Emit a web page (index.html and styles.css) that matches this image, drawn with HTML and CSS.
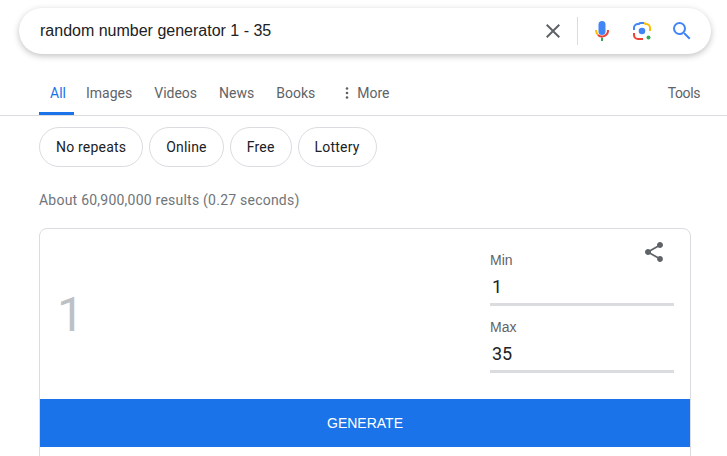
FILE: index.html
```
<!DOCTYPE html>
<html lang="en">
<head>
  <meta charset="UTF-8" />
  <title>random number generator 1 - 35</title>
  <link rel="stylesheet" href="styles.css">
</head>
<body>

<div class="search-wrap">
  <div class="search-box">
    <span class="query">random number generator 1 - 35</span>
    <svg class="ico-clear" width="24" height="24" viewBox="0 0 24 24"><path fill="#5f6368" d="M19 6.41 17.59 5 12 10.59 6.41 5 5 6.41 10.59 12 5 17.59 6.41 19 12 13.41 17.59 19 19 17.59 13.41 12z"/></svg>
    <span class="divider"></span>
    <svg class="ico-mic" width="24" height="24" viewBox="0 0 24 24">
      <rect fill="#4285f4" x="8.500" y="2" width="7" height="14" rx="3.500"/>
      <path fill="#34a853" d="M11 18.500h2V22h-2z"/>
      <path fill="none" stroke="#fbbc04" stroke-width="2" d="M6 11c0 2 .7 3.700 2 4.900"/>
      <path fill="none" stroke="#ea4335" stroke-width="2" d="M8 15.900A6 6 0 0 0 18 11"/>
    </svg>
    <svg class="ico-lens" width="24" height="24" viewBox="0 0 24 24">
      <g fill="none" stroke-width="2">
        <path stroke="#4285f4" d="M4 11V9a4 4 0 0 1 4-4h1l1-1h4"/>
        <path stroke="#fbbc04" d="M14 4l2 1a4 4 0 0 1 4 4v3"/>
        <path stroke="#ea4335" d="M4 14v2a4 4 0 0 0 4 4h5"/>
      </g>
      <circle fill="#4285f4" cx="12" cy="12" r="3.300"/>
      <circle fill="#34a853" cx="18.500" cy="18.500" r="2"/>
    </svg>
    <svg class="ico-search" width="24" height="24" viewBox="0 0 24 24"><path fill="#4285f4" d="M15.5 14h-.79l-.28-.27A6.47 6.47 0 0 0 16 9.500 6.500 6.500 0 1 0 9.500 16c1.610 0 3.090-.59 4.230-1.570l.27.28v.79l5 4.990L20.490 19l-4.990-5zm-6 0C7.010 14 5 11.990 5 9.500S7.010 5 9.500 5 14 7.010 14 9.500 11.990 14 9.500 14z"/></svg>
  </div>
</div>

<nav class="tabs">
  <a class="tab active">All</a>
  <a class="tab">Images</a>
  <a class="tab">Videos</a>
  <a class="tab">News</a>
  <a class="tab">Books</a>
  <a class="tab more"><svg width="16" height="16" viewBox="0 0 16 16"><circle fill="#5f6368" cx="8" cy="3.500" r="1.300"/><circle fill="#5f6368" cx="8" cy="8" r="1.300"/><circle fill="#5f6368" cx="8" cy="12.500" r="1.300"/></svg>More</a>
  <a class="tab tools">Tools</a>
</nav>

<div class="chips">
  <span class="chip">No repeats</span>
  <span class="chip">Online</span>
  <span class="chip">Free</span>
  <span class="chip">Lottery</span>
</div>

<div class="stats">About 60,900,000 results (0.27 seconds)</div>

<div class="card">
  <div class="card-top">
    <div class="result">1</div>
    <div class="range">
      <div class="share-row">
        <svg width="24" height="24" viewBox="0 0 24 24"><path fill="#5f6368" d="M18 16.080c-.76 0-1.440.3-1.960.77L8.910 12.700c.05-.23.090-.46.090-.7s-.04-.47-.09-.7l7.050-4.110c.54.5 1.250.81 2.040.81 1.660 0 3-1.340 3-3s-1.340-3-3-3-3 1.340-3 3c0 .24.040.47.090.7L8.040 9.810C7.500 9.310 6.790 9 6 9c-1.660 0-3 1.340-3 3s1.340 3 3 3c.79 0 1.500-.31 2.040-.81l7.120 4.160c-.05.21-.08.43-.08.65 0 1.610 1.310 2.920 2.920 2.920s2.920-1.310 2.920-2.920-1.310-2.920-2.920-2.920z"/></svg>
      </div>
      <div class="field">
        <div class="field-label">Min</div>
        <div class="field-value">1</div>
      </div>
      <div class="field">
        <div class="field-label">Max</div>
        <div class="field-value">35</div>
      </div>
    </div>
  </div>
  <div class="generate">GENERATE</div>
</div>

</body>
</html>
```

FILE: styles.css
```
html, body {
  height: 456px;
  overflow: hidden;
}

body {
  margin: 0;
  background-color: #fff;
  font-family: Roboto, "Liberation Sans", sans-serif;
  color: #202124;
}

.search-wrap {
  padding: 8px 16px 0 19px;
}

.search-box {
  display: flex;
  align-items: center;
  height: 46px;
  padding: 0 17px 0 21px;
  background-color: #fff;
  border-radius: 23px;
  box-shadow: 0 2px 6px rgba(32, 33, 36, 0.28);
}

.query {
  flex: 1;
  font-family: "Liberation Sans", Arial, sans-serif;
  font-size: 16px;
}

.ico-clear {
  margin-left: -1px;
}

.divider {
  width: 1px;
  height: 28px;
  margin: 0 12px 0 12px;
  background-color: #dadce0;
}

.ico-mic {
  margin-right: 16px;
}

.ico-lens {
  margin-right: 16px;
}

.tabs {
  display: flex;
  height: 50px;
  margin-top: 11px;
  padding: 0 26px 0 39px;
  border-bottom: 1px solid #dadce0;
  font-size: 14px;
}

.tab {
  display: flex;
  align-items: center;
  height: 39px;
  margin-right: 20px;
  padding: 8px 1px 0;
  color: #5f6368;
  border-bottom: 3px solid transparent;
}

.tab.active {
  width: 15px;
  padding: 8px 9px 0 11px;
  margin-right: 11px;
  color: #1a73e8;
  border-bottom-color: #1a73e8;
}

.tab.more svg {
  margin: 0 2px 0 2px;
}

.tab.tools {
  margin-left: auto;
  margin-right: 0;
  letter-spacing: -0.4px;
}

.chips {
  display: flex;
  gap: 6px;
  padding: 11px 0 0 39px;
}

.chip {
  display: flex;
  align-items: center;
  height: 38px;
  padding: 0 16px;
  border: 1px solid #dadce0;
  border-radius: 20px;
  font-size: 14px;
  letter-spacing: 0.2px;
}

.stats {
  margin: 23px 0 0 39px;
  font-size: 14px;
  line-height: 20px;
  letter-spacing: 0.23px;
  color: #70757a;
}

.card {
  margin: 18px 36px 0 39px;
  height: 300px;
  border: 1px solid #dadce0;
  border-radius: 8px;
}

.card-top {
  display: flex;
  justify-content: space-between;
  height: 170px;
}

.result {
  margin: 54px 0 0 17px;
  font-size: 48px;
  line-height: 64px;
  color: #bdc1c6;
}

.range {
  width: 184px;
  margin-right: 16px;
}

.share-row {
  display: flex;
  justify-content: flex-end;
  height: 11px;
  padding: 11px 8px 0 0;
}

.field {
  margin-bottom: 10px;
  height: 57px;
}

.field-label {
  font-family: "Liberation Sans", Arial, sans-serif;
  font-size: 14px;
  line-height: 18px;
  color: #5f6368;
}

.field-value {
  height: 27px;
  padding: 7px 0 0 2px;
  border-bottom: 3px solid #dadce0;
  font-size: 18px;
  line-height: 22px;
}

.generate {
  height: 48px;
  line-height: 48px;
  text-align: center;
  background-color: #1a73e8;
  color: #fff;
  font-family: "Liberation Sans", Arial, sans-serif;
  font-size: 14px;
}
```
